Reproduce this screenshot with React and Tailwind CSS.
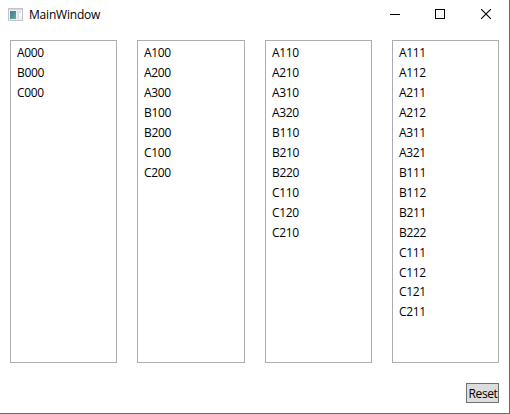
const lists = [
  { width: 'w-[107px]', items: ['A000', 'B000', 'C000'] },
  { width: 'w-[108px]', items: ['A100', 'A200', 'A300', 'B100', 'B200', 'C100', 'C200'] },
  { width: 'w-[107px]', items: ['A110', 'A210', 'A310', 'A320', 'B110', 'B210', 'B220', 'C110', 'C120', 'C210'] },
  {
    width: 'w-[107px]',
    items: ['A111', 'A112', 'A211', 'A212', 'A311', 'A321', 'B111', 'B112', 'B211', 'B222', 'C111', 'C112', 'C121', 'C211'],
  },
];

function AppIcon() {
  return (
    <svg width="16" height="14" viewBox="0 0 16 14" shapeRendering="crispEdges">
      <defs>
        <linearGradient id="pane" x1="0" y1="0" x2="1" y2="1">
          <stop offset="0" stopColor="#4a7ba8" />
          <stop offset="0.5" stopColor="#4d9292" />
          <stop offset="1" stopColor="#72b482" />
        </linearGradient>
      </defs>
      <rect x="0.5" y="0.5" width="14" height="12" fill="#f1f1f5" stroke="#c3c3c9" />
      <rect x="1" y="1" width="13" height="1" fill="#d5d5dd" />
      <rect x="2" y="3" width="6" height="8" fill="url(#pane)" />
      <rect x="9" y="3" width="2" height="8" fill="#e1e2e8" />
      <rect x="11" y="3" width="3" height="5" fill="#ffffff" />
      <rect x="11" y="3" width="2" height="2" fill="#cfe0d8" />
    </svg>
  );
}

function TitleBar() {
  return (
    <header className="flex h-[30px] items-start pl-2">
      <div className="flex h-full flex-1 items-center">
        <AppIcon />
        <h1 className="ml-[5px] text-[12px] leading-[16px] tracking-[-0.2px]">MainWindow</h1>
      </div>
      <div className="flex h-7 items-center">
        <button aria-label="Minimize" className="flex h-full w-[46px] items-center justify-center">
          <svg width="10" height="10" viewBox="0 0 10 10" shapeRendering="crispEdges">
            <rect y="5" width="10" height="1" />
          </svg>
        </button>
        <button aria-label="Maximize" className="flex h-full w-[44px] items-center justify-center">
          <svg width="10" height="10" viewBox="0 0 10 10" shapeRendering="crispEdges">
            <rect x="0.5" y="0.5" width="9" height="9" fill="none" stroke="#000" />
          </svg>
        </button>
        <button aria-label="Close" className="flex h-full w-[47px] items-center justify-center pl-px">
          <svg width="10" height="10" viewBox="0 0 10 10">
            <path d="M0 0L10 10M10 0L0 10" stroke="#000" strokeWidth="1.1" />
          </svg>
        </button>
      </div>
    </header>
  );
}

export default function App() {
  return (
    <div className="flex h-[414px] w-[510px] flex-col border-r border-b border-[#696969] bg-white font-['Open_Sans','Noto_Sans',sans-serif] text-black">
      <TitleBar />
      <main className="flex flex-col px-[10px] pt-[10px]">
        <div className="flex justify-between">
          {lists.map((list) => (
            <ul key={list.items[0]} className={`${list.width} h-[323px] border border-[#abadb3] pt-[1.86px] pl-[6px]`}>
              {list.items.map((item) => (
                <li key={item} className="h-[19.97px] text-[12px] leading-[20px] tracking-[-0.35px]">
                  {item}
                </li>
              ))}
            </ul>
          ))}
        </div>
        <button className="mt-5 flex h-5 w-[33px] items-center justify-center self-end border border-[#707070] bg-[#dddddd] pt-px pl-px text-[12px] leading-[16px] tracking-[-0.4px]">
          Reset
        </button>
      </main>
    </div>
  );
}
